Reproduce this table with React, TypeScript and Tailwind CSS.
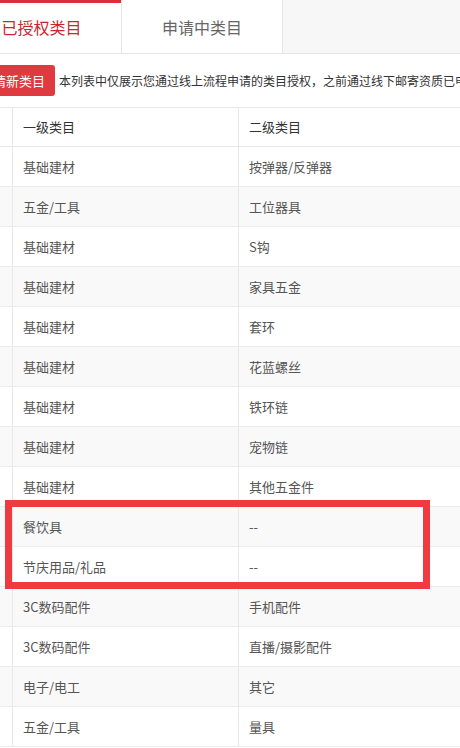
const rows: [string, string][] = [
  ['基础建材', '按弹器/反弹器'],
  ['五金/工具', '工位器具'],
  ['基础建材', 'S钩'],
  ['基础建材', '家具五金'],
  ['基础建材', '套环'],
  ['基础建材', '花蓝螺丝'],
  ['基础建材', '铁环链'],
  ['基础建材', '宠物链'],
  ['基础建材', '其他五金件'],
  ['餐饮具', '--'],
  ['节庆用品/礼品', '--'],
  ['3C数码配件', '手机配件'],
  ['3C数码配件', '直播/摄影配件'],
  ['电子/电工', '其它'],
  ['五金/工具', '量具'],
]

export default function App() {
  return (
    <div
      className="w-[460px] h-[748px] overflow-hidden bg-white text-[#555]"
      style={{ fontFamily: '"Microsoft YaHei", "Noto Sans CJK SC", sans-serif' }}
    >
      <div className="-ml-[38px] w-[560px]">
        {/* tabs */}
        <div className="flex h-[54px] border-b border-[#e6e6e6] bg-[#f7f7f7]">
          <div className="relative w-[160px] bg-white flex items-center justify-center text-[16px] text-[#c9252c] border-r border-[#e6e6e6]">
            <div className="absolute left-0 top-0 h-[3px] w-full bg-[#d9303a]" />
            已授权类目
          </div>
          <div className="w-[161px] bg-white flex items-center justify-center text-[16px] text-[#666] border-r border-[#e6e6e6]">
            申请中类目
          </div>
        </div>

        {/* notice */}
        <div className="flex items-center h-[53px] pl-[8px]">
          <button className="shrink-0 whitespace-nowrap h-[31px] w-[85px] rounded-[3px] bg-[#df3a3f] text-white text-[13px] leading-none">
            申请新类目
          </button>
          <span className="ml-[4px] text-[12px] text-[#333] whitespace-nowrap">
            本列表中仅展示您通过线上流程申请的类目授权，之前通过线下邮寄资质已申请的类目不在此列表中展示
          </span>
        </div>

        {/* table */}
        <div className="relative border-t border-[#e8e8e8]">
          <div className="flex h-[39px] border-b border-[#e8e8e8] bg-white text-[13px] text-[#333]">
            <div className="w-[51px] border-r border-[#e8e8e8]" />
            <div className="w-[226px] border-r border-[#e8e8e8] flex items-center pl-[10px]">一级类目</div>
            <div className="flex-1 flex items-center pl-[10px]">二级类目</div>
          </div>
          {rows.map(([a, b], i) => (
            <div
              key={i}
              className={`flex h-[40px] border-b border-[#ececec] text-[13px] ${i % 2 === 1 ? 'bg-[#f9f9f9]' : 'bg-white'}`}
            >
              <div className="w-[51px] border-r border-[#e8e8e8]" />
              <div className="w-[226px] border-r border-[#e8e8e8] flex items-center pl-[10px]">{a}</div>
              <div className="flex-1 flex items-center pl-[10px]">{b}</div>
            </div>
          ))}

          {/* highlight */}
          <div className="absolute left-[43px] top-[392px] w-[425px] h-[89px] border-[7px] border-[#ef3a3f]" />
        </div>
      </div>
    </div>
  )
}
